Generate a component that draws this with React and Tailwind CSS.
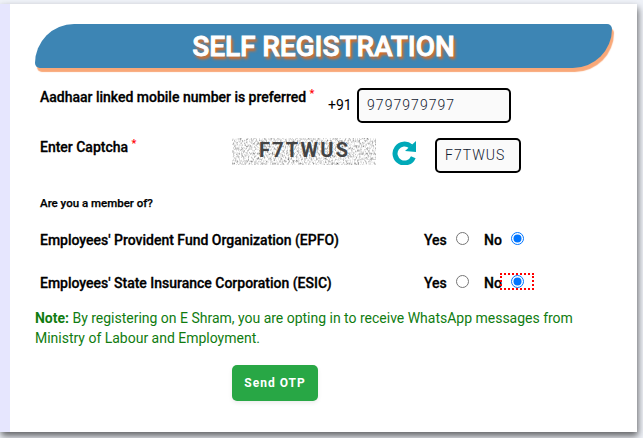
import { useState } from "react";

const MEMBERSHIPS = [
  { id: "epfo", label: "Employees' Provident Fund Organization (EPFO)" },
  { id: "esic", label: "Employees' State Insurance Corporation (ESIC)" },
];

function Radio({ checked, onClick }) {
  return (
    <svg viewBox="0 0 13 13" className="size-[13px] shrink-0" onClick={onClick}>
      <circle
        cx="6.5"
        cy="6.5"
        r="6"
        fill="#fff"
        stroke={checked ? "#0075ff" : "#767676"}
      />
      {checked && <circle cx="6.5" cy="6.5" r="4" fill="#0075ff" />}
    </svg>
  );
}

function Required() {
  return (
    <span className="relative -top-[5px] text-[11px] text-[#ff0000] [-webkit-text-stroke:0]">
      *
    </span>
  );
}

function CaptchaImage({ code }) {
  return (
    <svg width="144" height="27" viewBox="0 0 144 27" className="block">
      <filter id="noise" x="0" y="0" width="100%" height="100%">
        <feTurbulence
          type="fractalNoise"
          baseFrequency="0.62 0.4"
          numOctaves="2"
          seed="7"
        />
        <feColorMatrix
          type="matrix"
          values="1.7 0 0 0 -0.03  1.7 0 0 0 -0.03  1.7 0 0 0 -0.03  0 0 0 0 1"
        />
      </filter>
      <rect width="144" height="27" filter="url(#noise)" />
      <text
        x="27"
        y="19"
        fontFamily="Roboto, sans-serif"
        fontSize="20"
        fontWeight="700"
        textLength="89"
        fill="#444"
      >
        {code}
      </text>
    </svg>
  );
}

export default function App() {
  const [mobile, setMobile] = useState("9797979797");
  const [captcha, setCaptcha] = useState("F7TWUS");
  const [member, setMember] = useState({ epfo: "no", esic: "no" });

  return (
    <div className="h-[438px] w-[643px] overflow-hidden bg-[#eff2f8] pt-1 font-['Roboto',sans-serif] text-sm text-black">
      <div className="flex h-[428px] w-[637px] bg-white shadow-[1px_4px_7px_rgba(0,0,0,0.6)]">
        <div className="w-[10px] shrink-0 bg-[#e6e6fe]" />
        <div className="flex-1 pt-5 pl-[25px]">
          <div className="flex h-11 w-[577px] items-center justify-center rounded-tl-[40px] rounded-tr-[5px] rounded-br-[40px] rounded-bl-[5px] bg-[#3d85b4] shadow-[2px_4px_1px_#f9a878]">
            <h1 className="pt-0.5 text-[28px] font-medium tracking-[-0.05px] text-white [-webkit-text-stroke:0.9px_white] [text-shadow:2px_3px_3px_#f26a10]">
              SELF REGISTRATION
            </h1>
          </div>

          <div className="mt-5 flex h-[35px] pl-[5px]">
            <div className="w-[288px] shrink-0 font-medium leading-[18px] tracking-[-0.01px] [-webkit-text-stroke:0.3px]">
              Aadhaar linked mobile number is preferred <Required />
            </div>
            <span className="w-[29px] shrink-0 leading-[34px]">+91</span>
            <input
              value={mobile}
              onChange={(e) => setMobile(e.target.value)}
              className="h-[35px] w-[154px] rounded-[5px] border-2 border-black bg-[#fafafa] px-2 pb-px font-light tracking-[1.05px] text-[#10202f] outline-none"
            />
          </div>

          <div className="mt-[15px] flex h-[35px] pl-[5px]">
            <div className="w-[192px] shrink-0 font-medium leading-[18px] tracking-[-0.01px] [-webkit-text-stroke:0.3px]">
              Enter Captcha <Required />
            </div>
            <CaptchaImage code="F7TWUS" />
            <svg
              viewBox="0 0 24 24"
              className="mt-[3px] ml-4 size-6 shrink-0"
              fill="none"
            >
              <path
                d="M21.3 16.2A9.5 9.5 0 1 1 18.8 5.4"
                stroke="#00a9b8"
                strokeWidth="5"
              />
              <path d="M24 0v11l-11-1z" fill="#00a9b8" />
            </svg>
            <input
              value={captcha}
              onChange={(e) => setCaptcha(e.target.value)}
              className="ml-[19px] h-[35px] w-[86px] rounded-[5px] border-2 border-black bg-[#fafafa] px-2 pb-px font-light tracking-[1.05px] text-[#10202f] outline-none"
            />
          </div>

          <div className="mt-[22px] pl-[5px] text-[11.5px] font-medium leading-4 [-webkit-text-stroke:0.25px]">
            Are you a member of?
          </div>

          <div className="mt-[18px] space-y-[23px] pl-[5px]">
            {MEMBERSHIPS.map(({ id, label }) => (
              <div
                key={id}
                className="flex h-5 font-medium leading-[22px] tracking-[-0.01px] [-webkit-text-stroke:0.3px]"
              >
                <span className="w-[384px] shrink-0">{label}</span>
                <span className="w-8 shrink-0">Yes</span>
                <span className="mt-[3px] w-7 shrink-0">
                  <Radio
                    checked={member[id] === "yes"}
                    onClick={() => setMember({ ...member, [id]: "yes" })}
                  />
                </span>
                <span className="w-4 shrink-0">No</span>
                <span
                  className={
                    id === "esic"
                      ? "mt-px h-[17px] w-[34px] border-2 border-dotted border-[#f00] pl-[9px]"
                      : "mt-[3px] w-[34px] pl-[11px]"
                  }
                >
                  <Radio
                    checked={member[id] === "no"}
                    onClick={() => setMember({ ...member, [id]: "no" })}
                  />
                </span>
              </div>
            ))}
          </div>

          <p className="mt-4 w-[560px] leading-5 tracking-[-0.01px] text-[#107c10]">
            <strong className="font-bold">Note:</strong> By registering on E
            Shram, you are opting in to receive WhatsApp messages from Ministry
            of Labour and Employment.
          </p>

          <button className="mt-[17px] ml-[197px] h-9 w-[86px] rounded-[5px] bg-[#28a745] text-xs font-bold tracking-[1px] text-white shadow-[0_2px_4px_rgba(0,0,0,0.08)]">
            Send OTP
          </button>
        </div>
      </div>
    </div>
  );
}
